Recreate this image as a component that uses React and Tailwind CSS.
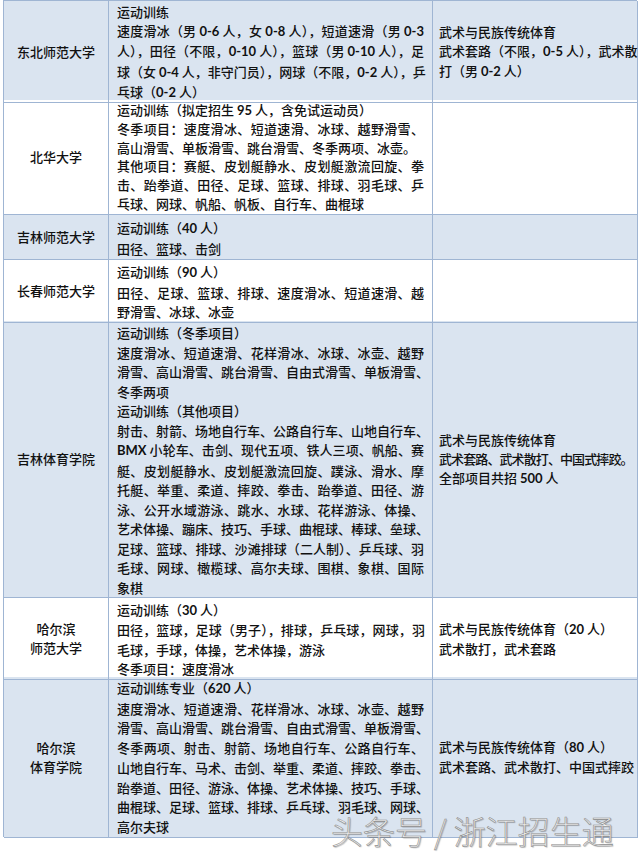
import React from "react";

const BLUE = "bg-[#dae4f0]";
const WHITE = "bg-white";

// rows of the admissions table; each paragraph is a list of visual lines
const rows = [
  {
    h: "h-[99px]",
    lh: "leading-[19.2px] pt-[1px]",
    bg: BLUE,
    name: ["东北师范大学"],
    mid: [
      ["运动训练"],
      [
        "速度滑冰（男 0-6 人，女 0-8 人），短道速滑（男 0-3",
        "人），田径（不限，0-10 人），篮球（男 0-10 人），足",
        "球（女 0-4 人，非守门员），网球（不限，0-2 人），乒",
        "乓球（0-2 人）",
      ],
    ],
    right: [["武术与民族传统体育"], ["武术套路（不限，0-5 人），武术散", "打（男 0-2 人）"]],
  },
  {
    h: "h-[114px]",
    lh: "leading-[18.8px] pt-[1px]",
    bg: WHITE,
    name: ["北华大学"],
    mid: [
      ["运动训练（拟定招生 95 人，含免试运动员）"],
      ["冬季项目：速度滑冰、短道速滑、冰球、越野滑雪、", "高山滑雪、单板滑雪、跳台滑雪、冬季两项、冰壶。"],
      [
        "其他项目：赛艇、皮划艇静水、皮划艇激流回旋、拳",
        "击、跆拳道、田径、足球、篮球、排球、羽毛球、乒",
        "乓球、网球、帆船、帆板、自行车、曲棍球",
      ],
    ],
    right: [],
  },
  {
    h: "h-[46px]",
    lh: "leading-[19.6px] pt-[4px]",
    bg: BLUE,
    name: ["吉林师范大学"],
    mid: [["运动训练（40 人）"], ["田径、篮球、击剑"]],
    right: [],
  },
  {
    h: "h-[61px]",
    lh: "leading-[19.6px] pt-[2px]",
    bg: WHITE,
    name: ["长春师范大学"],
    mid: [["运动训练（90 人）"], ["田径、足球、篮球、排球、速度滑冰、短道速滑、越", "野滑雪、冰球、冰壶"]],
    right: [],
  },
  {
    h: "h-[277px]",
    lh: "leading-[19.5px] pt-[2px]",
    bg: BLUE,
    name: ["吉林体育学院"],
    mid: [
      ["运动训练（冬季项目）"],
      ["速度滑冰、短道速滑、花样滑冰、冰球、冰壶、越野", "滑雪、高山滑雪、跳台滑雪、自由式滑雪、单板滑雪、", "冬季两项"],
      ["运动训练（其他项目）"],
      [
        "射击、射箭、场地自行车、公路自行车、山地自行车、",
        "BMX 小轮车、击剑、现代五项、铁人三项、帆船、赛",
        "艇、皮划艇静水、皮划艇激流回旋、蹼泳、滑水、摩",
        "托艇、举重、柔道、摔跤、拳击、跆拳道、田径、游",
        "泳、公开水域游泳、跳水、水球、花样游泳、体操、",
        "艺术体操、蹦床、技巧、手球、曲棍球、棒球、垒球、",
        "足球、篮球、排球、沙滩排球（二人制）、乒乓球、羽",
        "毛球、网球、橄榄球、高尔夫球、围棋、象棋、国际",
        "象棋",
      ],
    ],
    right: [["武术与民族传统体育"], ["~武术套路、武术散打、中国式摔跤。"], ["全部项目共招 500 人"]],
  },
  {
    h: "h-[79px]",
    lh: "leading-[19.4px] pt-[2px]",
    bg: WHITE,
    name: ["哈尔滨", "师范大学"],
    mid: [
      ["运动训练（30 人）"],
      ["~田径，篮球，足球（男子），排球，乒乓球，网球，羽", "毛球，手球，体操，艺术体操，游泳"],
      ["冬季项目：速度滑冰"],
    ],
    right: [["武术与民族传统体育（20 人）"], ["武术散打，武术套路"]],
  },
  {
    h: "h-[160px]",
    lh: "leading-[19.7px] pt-[1px]",
    bg: BLUE,
    name: ["哈尔滨", "体育学院"],
    mid: [
      ["运动训练专业（620 人）"],
      [
        "速度滑冰、短道速滑、花样滑冰、冰球、冰壶、越野",
        "滑雪、高山滑雪、跳台滑雪、自由式滑雪、单板滑雪、",
        "冬季两项、射击、射箭、场地自行车、公路自行车、",
        "山地自行车、马术、击剑、举重、柔道、摔跤、拳击、",
        "跆拳道、田径、游泳、体操、艺术体操、技巧、手球、",
        "曲棍球、足球、篮球、排球、乒乓球、羽毛球、网球、",
        "高尔夫球",
      ],
    ],
    right: [["武术与民族传统体育（80 人）"], ["武术套路、武术散打、中国式摔跤"]],
  },
];

// latin runs (numbers, BMX) are set bold like the original document
function Txt({ s }) {
  const parts = s.split(/([A-Z0-9][A-Z0-9-]*)/);
  return parts.map((p, i) =>
    i % 2 === 1 ? (
      <span key={i} className="font-['Lato',sans-serif] font-bold text-[13px]">
        {p}
      </span>
    ) : (
      <React.Fragment key={i}>{p}</React.Fragment>
    )
  );
}

function Para({ lines }) {
  return lines.map((raw, i) => {
    const tight = raw.startsWith("~");
    const s = tight ? raw.slice(1) : raw;
    const justify = i < lines.length - 1 || tight;
    return (
      <div
        key={i}
        className={`whitespace-nowrap ${justify ? "text-justify [text-align-last:justify]" : ""} ${
          tight ? "tracking-[-0.9px]" : ""
        }`}
      >
        <Txt s={s} />
      </div>
    );
  });
}

export default function App() {
  return (
    <div className="relative w-[640px] h-[859px] overflow-hidden bg-white font-['Noto_Sans_CJK_SC','Noto_Sans',sans-serif] text-[13px] leading-[19.3px] font-medium text-[#111111]">
      <div className="ml-[3px] w-[634px] border-l border-t border-[#9fb5d3]">
        {rows.map((r, idx) => (
          <div key={idx} className={`grid grid-cols-[105px_324px_205px] ${r.h} ${r.bg}`}>
            <div className="flex flex-col items-center justify-center border-r border-b border-[#9fb5d3] text-center">
              {r.name.map((n) => (
                <div key={n}>{n}</div>
              ))}
            </div>
            <div className={`border-r border-b border-[#9fb5d3] pl-[8px] pr-[8px] ${r.lh}`}>
              {r.mid.map((p, i) => (
                <Para key={i} lines={p} />
              ))}
            </div>
            <div className="flex flex-col justify-center border-r border-b border-[#9fb5d3] pl-[6px] pr-[5px]">
              {r.right.map((p, i) => (
                <Para key={i} lines={p} />
              ))}
            </div>
          </div>
        ))}
      </div>

      {/* watermark */}
      <div className="absolute left-[331px] top-[810px] whitespace-nowrap font-['Noto_Sans_CJK_SC',sans-serif] text-[32px] leading-[40px] font-light text-[#f0f0f0] [-webkit-text-stroke:0.6px_#8c8c8c] [text-shadow:1px_1px_1px_rgba(0,0,0,0.25)]">
        头条号 / 浙江招生通
      </div>
    </div>
  );
}
